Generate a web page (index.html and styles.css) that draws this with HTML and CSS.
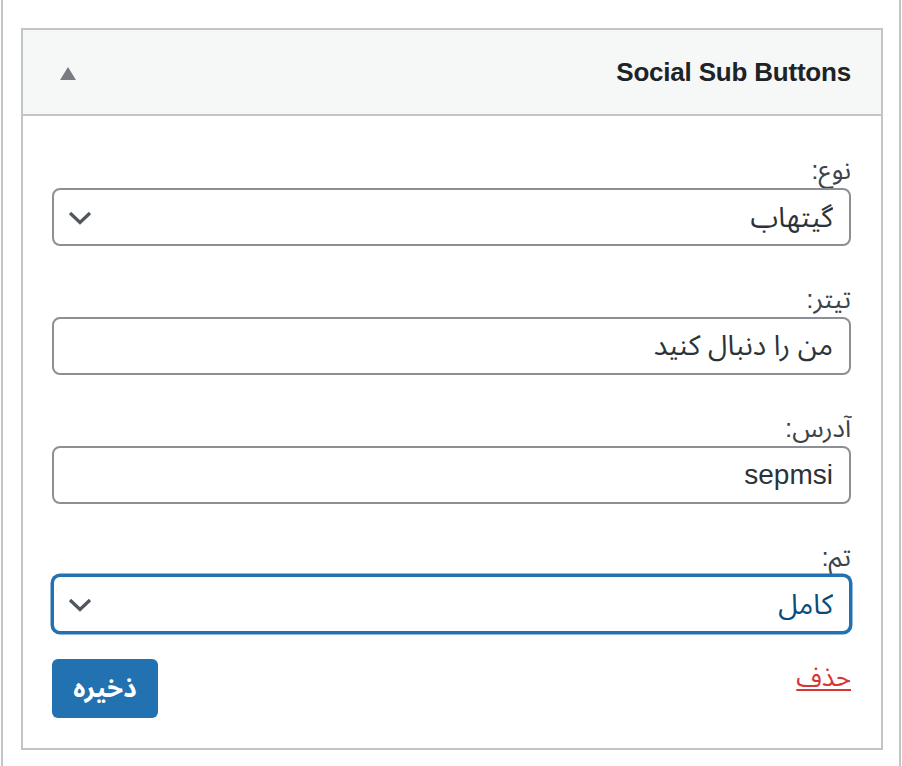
FILE: index.html
```html
<!DOCTYPE html>
<html lang="fa" dir="rtl">
<head>
<meta charset="utf-8">
<title>Social Sub Buttons</title>
<link rel="stylesheet" href="styles.css">
</head>
<body>
<div class="frame">
  <div class="widget">
    <div class="widget-top">
      <h3 class="widget-title">Social Sub Buttons</h3>
      <button class="toggle" type="button" aria-label="toggle">
        <svg width="16" height="13" viewBox="0 0 16 13"><polygon points="8,0 16,13 0,13" fill="#787c82"/></svg>
      </button>
    </div>
    <div class="widget-inside">
      <div class="field">
        <label class="label">نوع:</label>
        <div class="select-wrap">
          <select class="control">
            <option>گیتهاب</option>
          </select>
          <svg class="chevron" width="24" height="14" viewBox="0 0 24 14"><polyline points="2,2 12,11.5 22,2" fill="none" stroke="#50575e" stroke-width="3.2"/></svg>
        </div>
      </div>
      <div class="field">
        <label class="label">تیتر:</label>
        <input class="control" type="text" value="من را دنبال کنید">
      </div>
      <div class="field">
        <label class="label">آدرس:</label>
        <input class="control" type="text" value="sepmsi">
      </div>
      <div class="field last">
        <label class="label">تم:</label>
        <div class="select-wrap">
          <select class="control focused">
            <option>کامل</option>
          </select>
          <svg class="chevron" width="24" height="14" viewBox="0 0 24 14"><polyline points="2,2 12,11.5 22,2" fill="none" stroke="#50575e" stroke-width="3.2"/></svg>
        </div>
      </div>
      <div class="actions">
        <a class="remove" href="#">حذف</a>
        <button class="save" type="button">ذخیره</button>
      </div>
    </div>
  </div>
</div>
</body>
</html>
```
FILE: styles.css
```css
html, body {
  margin: 0;
  padding: 0;
  background: #ffffff;
}
body {
  font-family: "Liberation Sans", "Noto Sans Arabic", "DejaVu Sans", sans-serif;
  color: #3c434a;
}
.frame {
  margin: 0 1px;
  border-left: 2px solid #c3c4c7;
  border-right: 2px solid #c3c4c7;
  padding: 28px 16px 16px 18px;
  min-height: 722px;
}
.widget {
  border: 2px solid #c3c4c7;
  background: #fff;
}
.widget-top {
  height: 84px;
  background: #f6f7f7;
  border-bottom: 2px solid #c3c4c7;
  display: flex;
  align-items: center;
  justify-content: space-between;
  padding: 0 30px 0 37px;
}
.widget-title {
  margin: 0;
  font-size: 26px;
  font-weight: bold;
  color: #1d2327;
  direction: ltr;
  letter-spacing: -0.2px;
}
.toggle {
  border: 0;
  background: none;
  padding: 0;
  margin-top: 2px;
  display: flex;
}
.widget-inside {
  padding: 36px 30px 30px 29px;
}
.field {
  display: flex;
  flex-direction: column;
  margin-bottom: 35px;
}
.field.last {
  margin-bottom: 26px;
}
.label {
  font-size: 26px;
  line-height: 36px;
  color: #3c434a;
}
.control {
  box-sizing: border-box;
  width: 100%;
  height: 58px;
  margin: 0;
  border: 2px solid #8c8f94;
  border-radius: 8px;
  background: #fff;
  color: #2c3338;
  font-family: inherit;
  font-size: 28px;
  padding: 0 16px;
  direction: rtl;
  outline: none;
}
select.control {
  appearance: none;
  -webkit-appearance: none;
}
.control.focused {
  border-color: #2271b1;
  box-shadow: 0 0 0 1.5px #2271b1;
  color: #0a4b78;
}
.select-wrap {
  position: relative;
}
.chevron {
  position: absolute;
  left: 16px;
  top: 23px;
  pointer-events: none;
}
.actions {
  display: flex;
  justify-content: space-between;
  align-items: flex-start;
}
.remove {
  font-size: 26px;
  line-height: 36px;
  color: #d63638;
  text-decoration: underline;
  text-underline-offset: 3px;
}
.save {
  height: 59px;
  width: 106px;
  border: 0;
  border-radius: 6px;
  background: #2271b1;
  color: #fff;
  font-family: inherit;
  font-size: 26px;
  font-weight: bold;
  padding: 0;
}
```
